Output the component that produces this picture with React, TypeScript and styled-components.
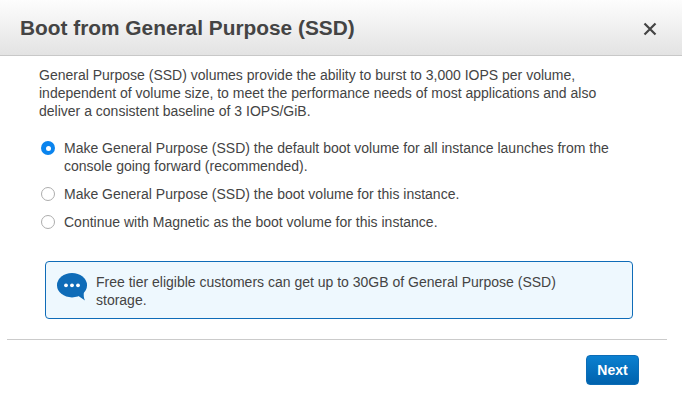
import * as React from 'react';
import styled, { createGlobalStyle } from 'styled-components';

const GlobalStyle = createGlobalStyle`
  html, body {
    margin: 0;
    padding: 0;
    background: #fff;
  }
  body {
    font-family: "Liberation Sans", Arial, sans-serif;
    color: #444;
  }
`;

const Dialog = styled.div`
  width: 682px;
  height: 400px;
  display: flex;
  flex-direction: column;
  overflow: hidden;
`;

const Header = styled.div`
  height: 56px;
  box-sizing: border-box;
  display: flex;
  align-items: center;
  justify-content: space-between;
  padding: 0 25px 0 20px;
  background: linear-gradient(to bottom, #fdfdfd, #e3e3e3);
  border-bottom: 1px solid #c8c8c8;
`;

const Title = styled.h1`
  margin: 0;
  font-size: 20.85px;
  font-weight: 700;
  color: #444;
`;

const CloseIcon = styled.svg`
  width: 14px;
  height: 14px;
  display: block;
  margin-top: 2px;
`;

const Body = styled.div`
  display: flex;
  flex-direction: column;
  padding: 10px 39px 0;
  font-size: 14px;
  line-height: 18px;
`;

const Intro = styled.p`
  margin: 0 0 19px;
  white-space: pre-line;
`;

const Options = styled.div`
  display: flex;
  flex-direction: column;
  gap: 10px;
`;

const Option = styled.label`
  display: flex;
  gap: 9px;
  padding-left: 2px;
  white-space: pre-line;
`;

const Radio = styled.span<{ $checked?: boolean }>`
  flex: none;
  box-sizing: border-box;
  width: 14px;
  height: 14px;
  margin-top: 2px;
  border-radius: 50%;
  background: ${p => (p.$checked ? '#0a84ee' : '#fff')};
  border: ${p => (p.$checked ? 'none' : '1px solid #adadad')};
  display: flex;
  align-items: center;
  justify-content: center;
  &::after {
    content: '';
    display: ${p => (p.$checked ? 'block' : 'none')};
    width: 5px;
    height: 5px;
    border-radius: 50%;
    background: #fff;
  }
`;

const Notice = styled.div`
  box-sizing: border-box;
  width: 588px;
  height: 58px;
  margin: 30px 0 0 6px;
  padding: 11px 12px 0 11px;
  display: flex;
  gap: 8px;
  background: #eef8fe;
  border: 1px solid #0f6cb8;
  border-radius: 4px;
  white-space: pre-line;
`;

const ChatIcon = styled.svg`
  flex: none;
  width: 31px;
  height: 28px;
`;

const Footer = styled.div`
  margin: 20px 15px 0 7px;
  padding: 15px 28px 0 0;
  border-top: 1px solid #cbcbcb;
  display: flex;
  justify-content: flex-end;
`;

const NextButton = styled.button`
  width: 53px;
  height: 30px;
  padding: 0;
  font-family: inherit;
  font-size: 14px;
  font-weight: 700;
  color: #fff;
  background: linear-gradient(to bottom, #0b80d0, #0062ad);
  border: 1px solid #0c6cb6;
  border-radius: 4px;
`;

export default function App() {
  return (
    <>
      <GlobalStyle />
      <Dialog>
        <Header>
          <Title>Boot from General Purpose (SSD)</Title>
          <CloseIcon viewBox="0 0 14 14">
            <path d="M1.5 1.5L12.5 12.5M12.5 1.5L1.5 12.5" stroke="#444" strokeWidth="2.2" fill="none" />
          </CloseIcon>
        </Header>
        <Body>
          <Intro>
            {'General Purpose (SSD) volumes provide the ability to burst to 3,000 IOPS per volume,\nindependent of volume size, to meet the performance needs of most applications and also\ndeliver a consistent baseline of 3 IOPS/GiB.'}
          </Intro>
          <Options>
            <Option>
              <Radio $checked />
              <span>{'Make General Purpose (SSD) the default boot volume for all instance launches from the\nconsole going forward (recommended).'}</span>
            </Option>
            <Option>
              <Radio />
              <span>Make General Purpose (SSD) the boot volume for this instance.</span>
            </Option>
            <Option>
              <Radio />
              <span>Continue with Magnetic as the boot volume for this instance.</span>
            </Option>
          </Options>
          <Notice>
            <ChatIcon viewBox="0 0 31 28">
              <ellipse cx="15" cy="12.2" rx="15" ry="12.2" fill="#0f6cb8" />
              <path d="M20 22L28 27.5C26.5 25 26.5 22 27 18Z" fill="#0f6cb8" />
              <circle cx="9" cy="12.3" r="1.9" fill="#fff" />
              <circle cx="15" cy="12.3" r="1.9" fill="#fff" />
              <circle cx="21" cy="12.3" r="1.9" fill="#fff" />
            </ChatIcon>
            <span>{'Free tier eligible customers can get up to 30GB of General Purpose (SSD)\nstorage.'}</span>
          </Notice>
        </Body>
        <Footer>
          <NextButton>Next</NextButton>
        </Footer>
      </Dialog>
    </>
  );
}
